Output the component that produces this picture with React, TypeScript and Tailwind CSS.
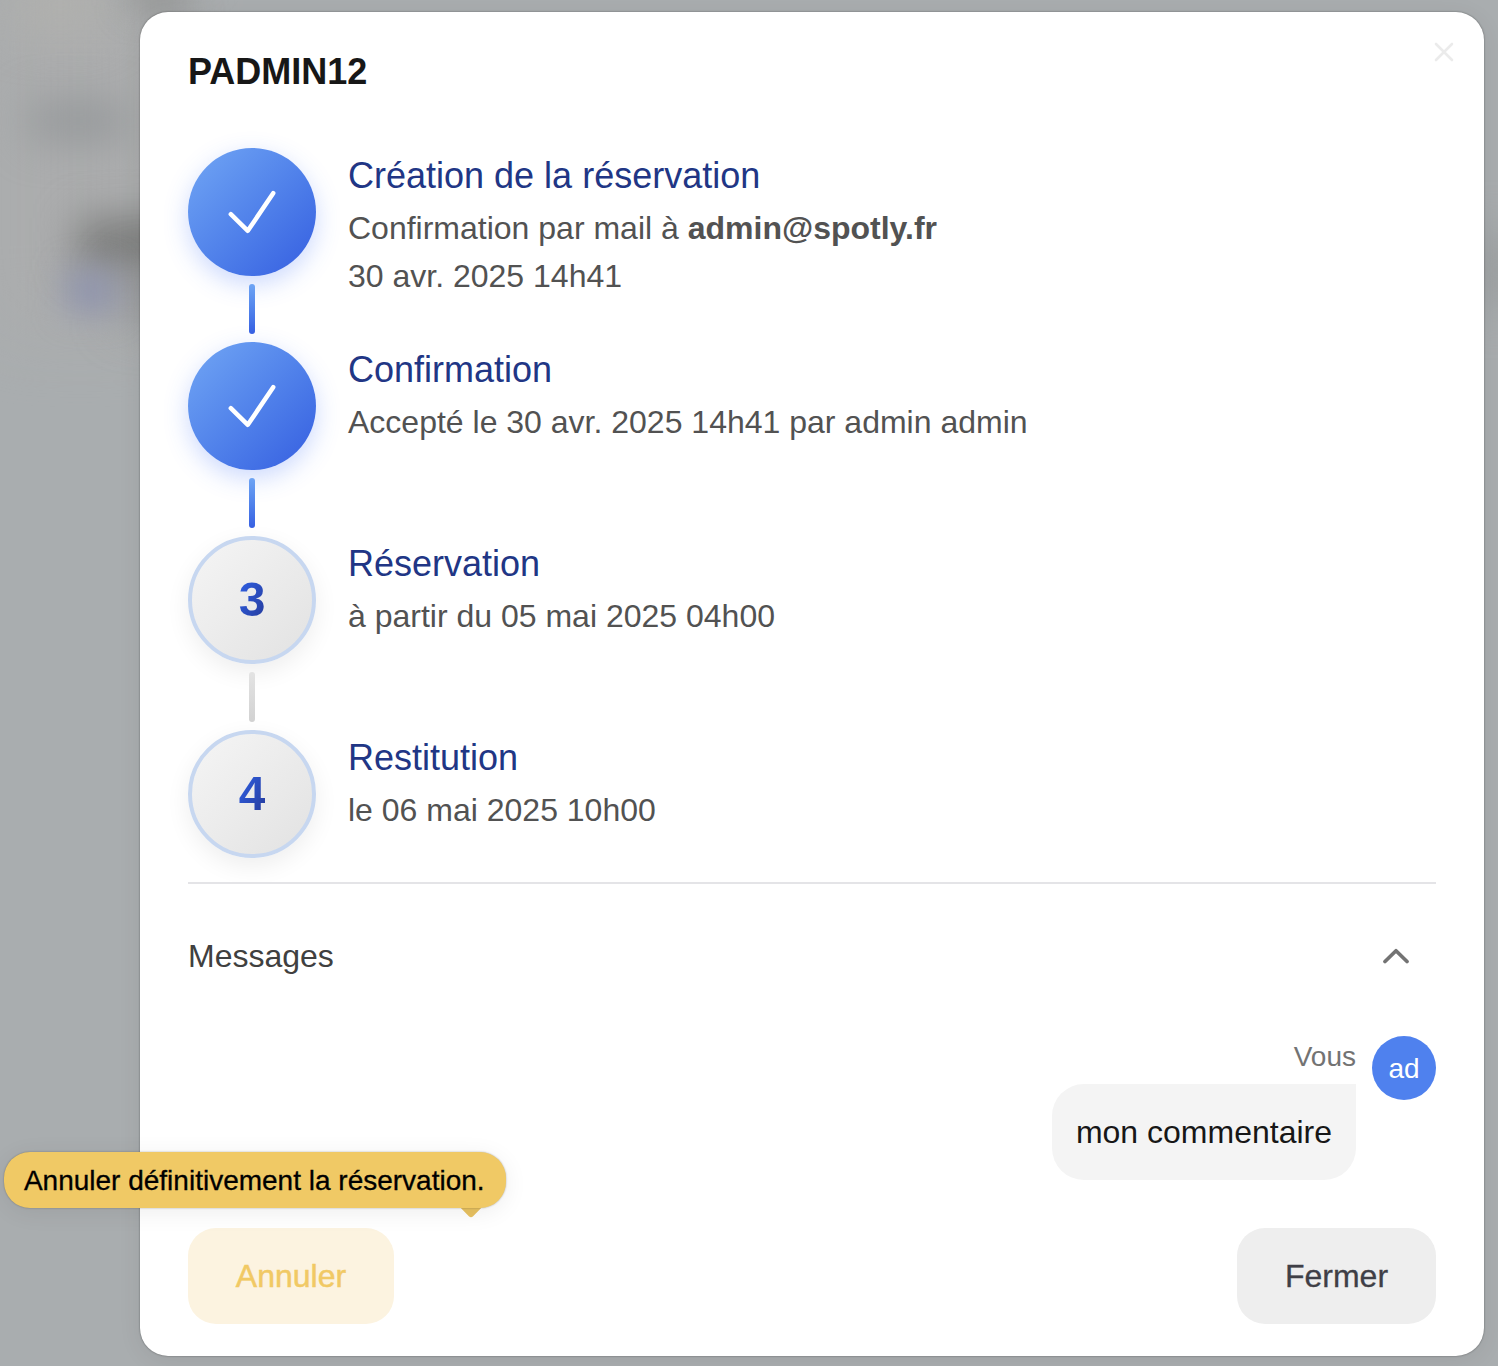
import React from "react";

type Step = {
  title: string;
  lines: React.ReactNode[];
  done: boolean;
};

const steps: Step[] = [
  {
    title: "Création de la réservation",
    lines: [
      <>
        Confirmation par mail à <strong className="font-bold">admin@spotly.fr</strong>
      </>,
      "30 avr. 2025 14h41",
    ],
    done: true,
  },
  { title: "Confirmation", lines: ["Accepté le 30 avr. 2025 14h41 par admin admin"], done: true },
  { title: "Réservation", lines: ["à partir du 05 mai 2025 04h00"], done: false },
  { title: "Restitution", lines: ["le 06 mai 2025 10h00"], done: false },
];

function Backdrop() {
  return (
    <div aria-hidden="true" className="absolute inset-0 overflow-hidden bg-[#a9adaf]">
      <div className="absolute -left-5 -top-10 h-[380px] w-[200px] bg-[#adadad] opacity-70 blur-2xl" />
      <div className="absolute left-[15px] -top-[20px] h-[50px] w-[90px] bg-[#b1b1ae] blur-xl" />
      <div className="absolute left-[130px] -top-[15px] h-[24px] w-[60px] bg-[#8f908f] blur-lg" />
      <div className="absolute left-[30px] top-[101px] h-[40px] w-[96px] bg-[#96999b] blur-[20px]" />
      <div className="absolute left-[78px] top-[218px] h-[56px] w-[150px] bg-[#7c7d7c] blur-[20px]" />
      <div className="absolute left-[122px] top-[270px] h-[50px] w-[80px] bg-[#949596] blur-xl" />
      <div className="absolute left-[66px] top-[270px] h-[42px] w-[50px] bg-[#9095ae] blur-lg" />
      <div className="absolute -right-5 top-[235px] h-[70px] w-[40px] bg-[#979a9b] blur-xl" />
    </div>
  );
}

function StepBadge({ index, done }: { index: number; done: boolean }) {
  if (done) {
    return (
      <div className="flex size-32 items-center justify-center rounded-full bg-linear-to-br from-[#72a6f4] to-[#365de0] shadow-[0_8px_24px_rgba(59,110,246,0.26)]">
        <svg width="48" height="44" viewBox="0 0 48 44" fill="none" stroke="white" strokeWidth="4.5" strokeLinecap="round" strokeLinejoin="round">
          <path d="M2.8 24.2 L19.8 40.8 L45.2 3.2" />
        </svg>
      </div>
    );
  }
  return (
    <div className="flex size-32 items-center justify-center rounded-full border-4 border-[#c7d7f0] bg-linear-to-br from-[#f5f5f5] to-[#e2e2e2] shadow-[0_8px_24px_rgba(0,0,0,0.07)]">
      <span className="bg-linear-to-br from-[#2f62e8] to-[#253a99] bg-clip-text text-5xl font-bold leading-none text-transparent">
        {index}
      </span>
    </div>
  );
}

function Timeline() {
  return (
    <ol className="flex flex-col">
      {steps.map((step, i) => (
        <li key={step.title} className="flex gap-8">
          <div className="flex flex-col items-center">
            <StepBadge index={i + 1} done={step.done} />
            {i < steps.length - 1 && (
              <span
                className={
                  step.done
                    ? "my-2 h-[50px] w-1.5 rounded-full bg-linear-to-b from-[#6ea4f4] to-[#3860e2]"
                    : "my-2 h-[50px] w-1.5 rounded-full bg-linear-to-b from-[#e3e3e3] to-[#d2d2d2]"
                }
              />
            )}
          </div>
          <div>
            <h3 className="text-4xl leading-[56px] text-[#213685]">{step.title}</h3>
            {step.lines.map((line, n) => (
              <p key={n} className="text-[32px] leading-[48px] text-[#525252]">
                {line}
              </p>
            ))}
          </div>
        </li>
      ))}
    </ol>
  );
}

export default function App() {
  return (
    <main className="relative h-[1366px] w-[1498px] overflow-hidden font-['Liberation_Sans',Arial,sans-serif]">
      <Backdrop />
      <section className="relative ml-[140px] mt-3 flex h-[1344px] w-[1344px] flex-col rounded-[28px] bg-white px-12 pb-8 shadow-[0_0_2px_rgba(0,0,0,0.45),0_4px_24px_rgba(0,0,0,0.07)]">
        <button aria-label="Fermer la fenêtre" className="absolute right-[30px] top-[30px]">
          <svg width="20" height="20" viewBox="0 0 20 20" fill="none" stroke="#ebebeb" strokeWidth="2.6" strokeLinecap="round">
            <path d="M2 2 L18 18 M18 2 L2 18" />
          </svg>
        </button>
        <header className="flex h-[136px] pt-8">
          <h2 className="text-4xl font-bold leading-[56px] text-[#171717]">PADMIN12</h2>
        </header>
        <Timeline />
        <hr className="mt-6 border-t-2 border-[#e4e4e7]" />
        <div className="mt-12 flex h-12 items-center justify-between pr-[26px]">
          <span className="text-[32px] leading-[48px] text-[#404040]">Messages</span>
          <svg width="28" height="16" viewBox="0 0 28 16" fill="none" stroke="#737373" strokeWidth="3.7" strokeLinecap="round" strokeLinejoin="round">
            <path d="M3 13.5 L14 2.7 L25 13.5" />
          </svg>
        </div>
        <div className="mt-14 flex items-start justify-end gap-4">
          <div className="flex flex-col items-end">
            <span className="h-12 text-[28px] leading-[42px] text-[#737373]">Vous</span>
            <p className="rounded-[32px] rounded-tr-none bg-[#f4f4f4] p-6 text-[32px] leading-[48px] text-[#171717]">
              mon commentaire
            </p>
          </div>
          <div className="flex size-16 items-center justify-center rounded-full bg-[#4f81ee] pt-0.5 text-[28px] text-white">
            ad
          </div>
        </div>
        <footer className="mt-auto flex items-center justify-between">
          <button className="h-24 w-[206px] rounded-[28px] bg-[#fcf3e0] text-[32px] text-[#f1c964] [-webkit-text-stroke:0.5px_#f1c964]">
            Annuler
          </button>
          <button className="h-24 w-[199px] rounded-[28px] bg-[#eeeeee] text-[32px] text-[#3f3f46] [-webkit-text-stroke:0.3px_#3f3f46]">
            Fermer
          </button>
        </footer>
      </section>
      <div role="tooltip" className="absolute left-1 top-[1152px]">
        <span className="absolute right-[27px] top-[47px] size-4 rotate-45 rounded-[3px] bg-[#e9c261]" />
        <div className="relative flex h-14 w-[501.5px] items-center justify-center whitespace-nowrap rounded-[26px] bg-[#f0c965] pt-0.5 pr-px text-[28px] text-black shadow-[0_0_2px_rgba(0,0,0,0.3),0_4px_24px_rgba(0,0,0,0.07)] [-webkit-text-stroke:0.3px_#000]">
          Annuler définitivement la réservation.
        </div>
      </div>
    </main>
  );
}
